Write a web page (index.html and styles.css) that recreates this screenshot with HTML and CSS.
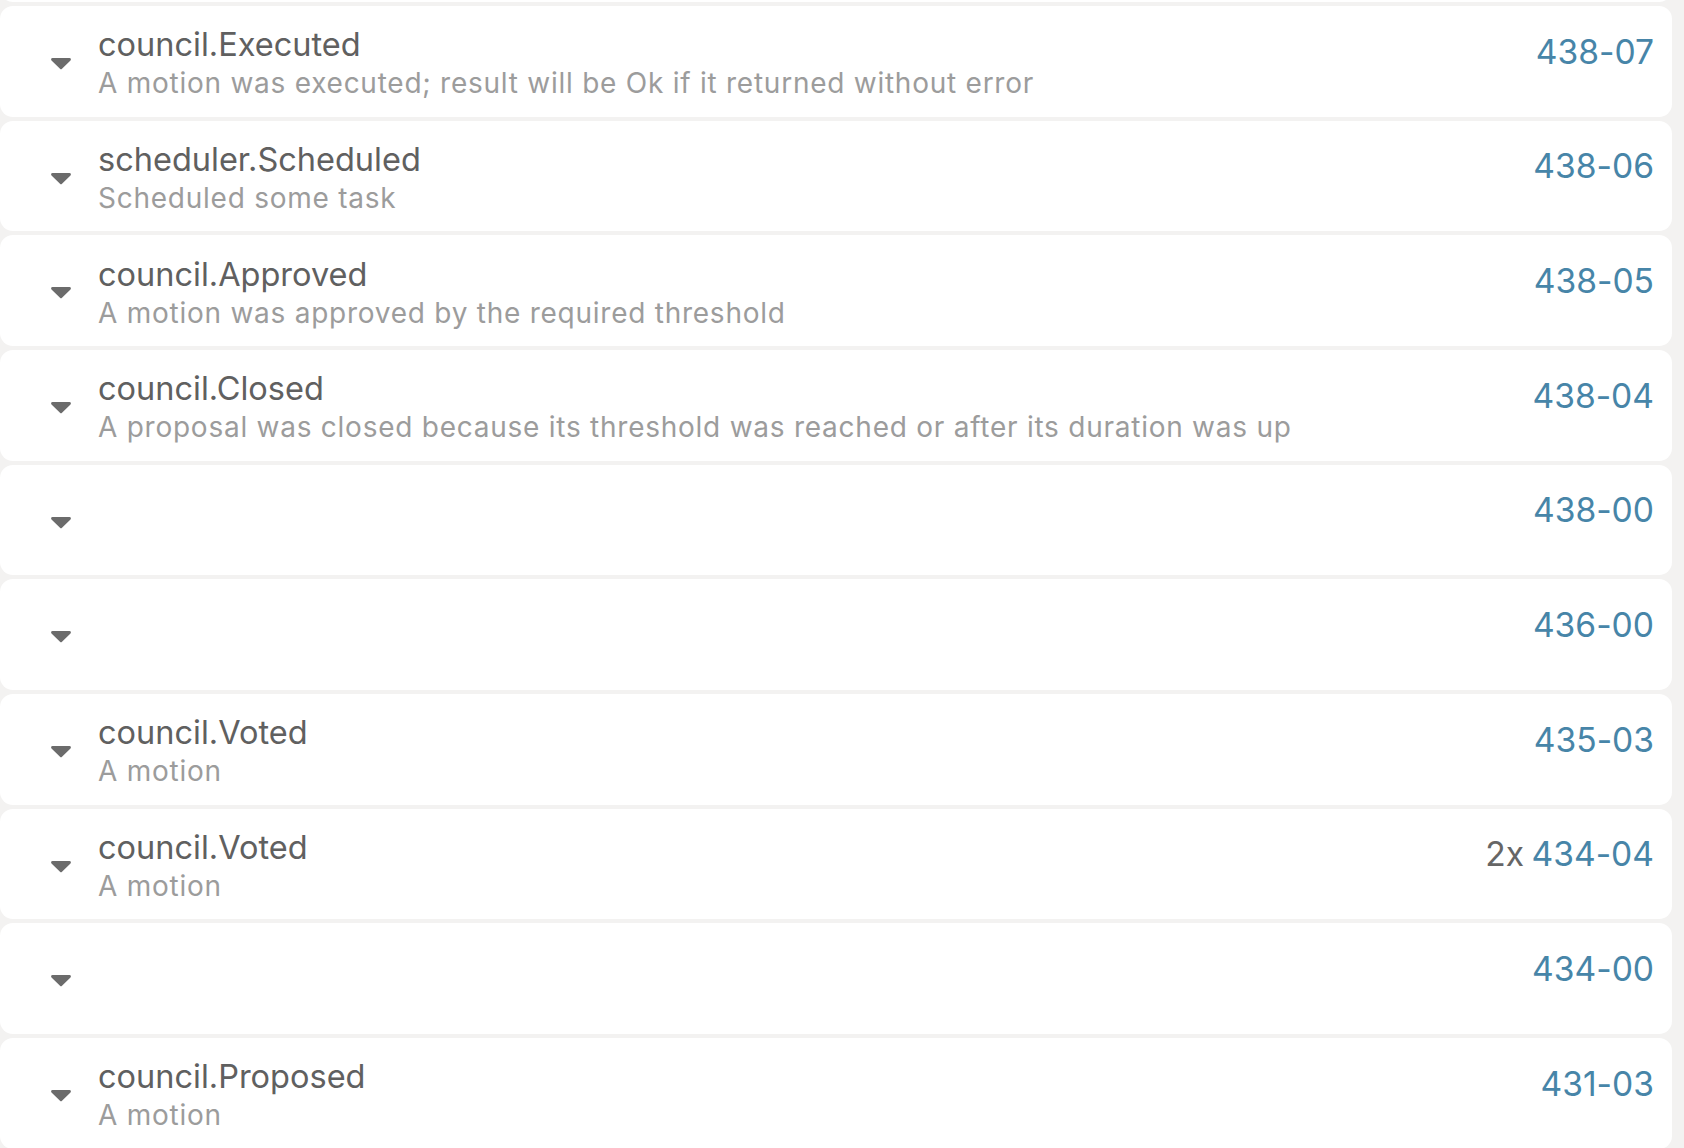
FILE: index.html
```html
<!DOCTYPE html>
<html>
<head>
<meta charset="utf-8">
<link rel="stylesheet" href="styles.css">
</head>
<body>
<div class="list">
  <div class="card"></div>

  <div class="card">
    <div class="chev"><svg viewBox="0 0 22 13" width="22" height="13"><path d="M2.5 1h17a1.4 1.4 0 0 1 1 2.4l-8.5 8.4a1.4 1.4 0 0 1-2 0L1.5 3.4A1.4 1.4 0 0 1 2.5 1z"/></svg></div>
    <div class="info">
      <div class="title">council.Executed</div>
      <div class="desc">A motion was executed; result will be Ok if it returned without error</div>
    </div>
    <div class="num"><a class="link">438-07</a></div>
  </div>

  <div class="card">
    <div class="chev"><svg viewBox="0 0 22 13" width="22" height="13"><path d="M2.5 1h17a1.4 1.4 0 0 1 1 2.4l-8.5 8.4a1.4 1.4 0 0 1-2 0L1.5 3.4A1.4 1.4 0 0 1 2.5 1z"/></svg></div>
    <div class="info">
      <div class="title">scheduler.Scheduled</div>
      <div class="desc">Scheduled some task</div>
    </div>
    <div class="num"><a class="link">438-06</a></div>
  </div>

  <div class="card">
    <div class="chev"><svg viewBox="0 0 22 13" width="22" height="13"><path d="M2.5 1h17a1.4 1.4 0 0 1 1 2.4l-8.5 8.4a1.4 1.4 0 0 1-2 0L1.5 3.4A1.4 1.4 0 0 1 2.5 1z"/></svg></div>
    <div class="info">
      <div class="title">council.Approved</div>
      <div class="desc">A motion was approved by the required threshold</div>
    </div>
    <div class="num"><a class="link">438-05</a></div>
  </div>

  <div class="card">
    <div class="chev"><svg viewBox="0 0 22 13" width="22" height="13"><path d="M2.5 1h17a1.4 1.4 0 0 1 1 2.4l-8.5 8.4a1.4 1.4 0 0 1-2 0L1.5 3.4A1.4 1.4 0 0 1 2.5 1z"/></svg></div>
    <div class="info">
      <div class="title">council.Closed</div>
      <div class="desc">A proposal was closed because its threshold was reached or after its duration was up</div>
    </div>
    <div class="num"><a class="link">438-04</a></div>
  </div>

  <div class="card">
    <div class="chev"><svg viewBox="0 0 22 13" width="22" height="13"><path d="M2.5 1h17a1.4 1.4 0 0 1 1 2.4l-8.5 8.4a1.4 1.4 0 0 1-2 0L1.5 3.4A1.4 1.4 0 0 1 2.5 1z"/></svg></div>
    <div class="info"></div>
    <div class="num"><a class="link">438-00</a></div>
  </div>

  <div class="card">
    <div class="chev"><svg viewBox="0 0 22 13" width="22" height="13"><path d="M2.5 1h17a1.4 1.4 0 0 1 1 2.4l-8.5 8.4a1.4 1.4 0 0 1-2 0L1.5 3.4A1.4 1.4 0 0 1 2.5 1z"/></svg></div>
    <div class="info"></div>
    <div class="num"><a class="link">436-00</a></div>
  </div>

  <div class="card">
    <div class="chev"><svg viewBox="0 0 22 13" width="22" height="13"><path d="M2.5 1h17a1.4 1.4 0 0 1 1 2.4l-8.5 8.4a1.4 1.4 0 0 1-2 0L1.5 3.4A1.4 1.4 0 0 1 2.5 1z"/></svg></div>
    <div class="info">
      <div class="title">council.Voted</div>
      <div class="desc">A motion</div>
    </div>
    <div class="num"><a class="link">435-03</a></div>
  </div>

  <div class="card">
    <div class="chev"><svg viewBox="0 0 22 13" width="22" height="13"><path d="M2.5 1h17a1.4 1.4 0 0 1 1 2.4l-8.5 8.4a1.4 1.4 0 0 1-2 0L1.5 3.4A1.4 1.4 0 0 1 2.5 1z"/></svg></div>
    <div class="info">
      <div class="title">council.Voted</div>
      <div class="desc">A motion</div>
    </div>
    <div class="num"><span class="count">2x </span><a class="link">434-04</a></div>
  </div>

  <div class="card">
    <div class="chev"><svg viewBox="0 0 22 13" width="22" height="13"><path d="M2.5 1h17a1.4 1.4 0 0 1 1 2.4l-8.5 8.4a1.4 1.4 0 0 1-2 0L1.5 3.4A1.4 1.4 0 0 1 2.5 1z"/></svg></div>
    <div class="info"></div>
    <div class="num"><a class="link">434-00</a></div>
  </div>

  <div class="card">
    <div class="chev"><svg viewBox="0 0 22 13" width="22" height="13"><path d="M2.5 1h17a1.4 1.4 0 0 1 1 2.4l-8.5 8.4a1.4 1.4 0 0 1-2 0L1.5 3.4A1.4 1.4 0 0 1 2.5 1z"/></svg></div>
    <div class="info">
      <div class="title">council.Proposed</div>
      <div class="desc">A motion</div>
    </div>
    <div class="num"><a class="link">431-03</a></div>
  </div>
</div>
</body>
</html>
```

FILE: styles.css
```css
html, body {
  margin: 0;
  padding: 0;
  background: #f3f2f1;
  overflow: hidden;
}
body {
  font-family: Inter, "Noto Sans", "Liberation Sans", sans-serif;
  font-feature-settings: "calt" 0;
}
.list {
  display: flex;
  flex-direction: column;
  gap: 4px;
  width: 1672px;
  margin-top: -108.67px;
}
.card {
  background: #ffffff;
  border-radius: 13px;
  height: 110.67px;
  flex: none;
  display: flex;
  align-items: flex-start;
  box-sizing: border-box;
  padding-right: 18px;
}
.chev {
  width: 22px;
  margin-left: 50px;
  margin-right: 26px;
  margin-top: 51px;
  height: 13px;
  flex: none;
}
.chev svg {
  display: block;
  fill: #6b6b6b;
}
.info {
  flex: 1;
  min-width: 0;
  padding-top: 19.2px;
}
.title {
  font-size: 32.5px;
  line-height: 40px;
  color: #606060;
}
.desc {
  font-size: 28px;
  line-height: 37px;
  color: #9c9c9c;
  letter-spacing: 0.75px;
}
.num {
  flex: none;
  font-size: 33.6px;
  line-height: 40px;
  padding-top: 25.8px;
  white-space: nowrap;
}
.link {
  color: #4785a8;
}
.count {
  color: #666666;
  margin-right: -2px;
}
```
